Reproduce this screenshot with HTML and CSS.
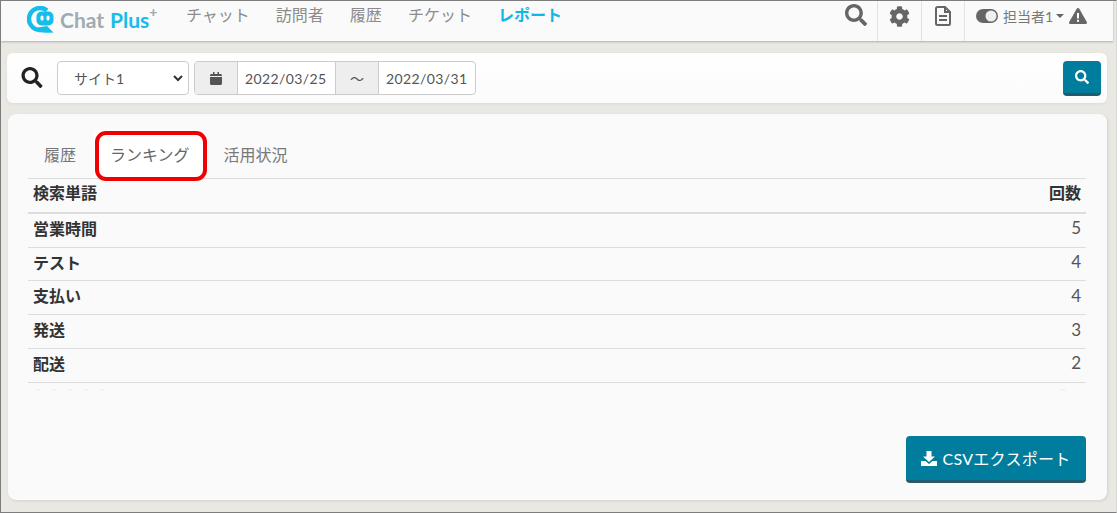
FILE: index.html
```html
<!DOCTYPE html>
<html lang="ja">
<head>
<meta charset="utf-8">
<title>レポート</title>
<link rel="stylesheet" href="styles.css">
</head>
<body>
<div class="frame">
  <header class="nav">
    <div class="logo">
      <svg class="logo-icon" viewBox="0 0 27 27"><path fill="none" stroke="#16bde9" stroke-width="4.500" d="M20 4.500A11 11 0 1 0 13 24"/><path fill="#16bde9" d="M11 21.500L20 20l6.500 6.500C21 27 15 26.500 11 26z"/><rect fill="#16bde9" x="9.500" y="5.500" width="17" height="14" rx="5"/><rect fill="#fff" x="13.500" y="9.500" width="3" height="5" rx="1.500"/><rect fill="#fff" x="19.500" y="9.500" width="3" height="5" rx="1.500"/></svg>
      <span class="logo-chat">Chat</span><span class="logo-plus">Plus</span><sup class="logo-sup">+</sup>
    </div>
    <nav class="menu">
      <a class="menu-item">チャット</a>
      <a class="menu-item">訪問者</a>
      <a class="menu-item">履歴</a>
      <a class="menu-item">チケット</a>
      <a class="menu-item menu-active">レポート</a>
    </nav>
    <div class="tools">
      <div class="tool tool-search">
        <svg class="ico ico-22" viewBox="0 0 512 512"><path fill="#666" d="M505 442.700L405.300 343c-4.500-4.500-10.600-7-17-7H372c27.600-35.300 44-79.700 44-128C416 93.100 322.900 0 208 0S0 93.100 0 208s93.100 208 208 208c48.300 0 92.700-16.400 128-44v16.300c0 6.400 2.500 12.500 7 17l99.700 99.700c9.400 9.400 24.600 9.400 33.900 0l28.300-28.300c9.400-9.400 9.400-24.600.1-34zM208 336c-70.700 0-128-57.200-128-128 0-70.700 57.200-128 128-128 70.700 0 128 57.200 128 128 0 70.700-57.200 128-128 128z"/></svg>
      </div>
      <div class="tool tool-gear">
        <svg class="ico ico-21" viewBox="0 0 512 512"><path fill="#666" d="M487.400 315.700l-42.600-24.600c4.300-23.200 4.300-47 0-70.200l42.600-24.600c4.900-2.800 7.100-8.600 5.500-14-11.100-35.600-30-67.800-54.700-94.600-3.800-4.100-10-5.100-14.800-2.300L380.800 110c-17.900-15.400-38.500-27.300-60.800-35.100V25.800c0-5.600-3.900-10.500-9.400-11.700-36.700-8.200-74.300-7.800-109.200 0-5.500 1.200-9.400 6.100-9.400 11.700V75c-22.200 7.900-42.800 19.800-60.800 35.100L88.700 85.500c-4.900-2.800-11-1.900-14.800 2.300-24.700 26.700-43.600 58.900-54.700 94.600-1.700 5.400.6 11.200 5.500 14L67.300 221c-4.300 23.200-4.300 47 0 70.200l-42.600 24.600c-4.900 2.800-7.100 8.600-5.500 14 11.100 35.600 30 67.800 54.700 94.600 3.800 4.100 10 5.100 14.800 2.300l42.600-24.600c17.900 15.400 38.500 27.300 60.800 35.100v49.200c0 5.600 3.900 10.500 9.400 11.700 36.700 8.200 74.300 7.800 109.200 0 5.500-1.200 9.400-6.100 9.400-11.700v-49.200c22.200-7.900 42.800-19.800 60.800-35.100l42.600 24.600c4.900 2.800 11 1.900 14.800-2.300 24.700-26.700 43.600-58.900 54.700-94.600 1.500-5.500-.7-11.300-5.600-14.100zM256 336c-44.100 0-80-35.900-80-80s35.900-80 80-80 80 35.900 80 80-35.900 80-80 80z"/></svg>
      </div>
      <div class="tool tool-doc">
        <svg class="ico-doc" viewBox="0 0 16 20"><path fill="none" stroke="#666" stroke-width="2" d="M10 1H2.500C1.600 1 1 1.600 1 2.500v15c0 .9.600 1.500 1.500 1.500h11c.9 0 1.500-.6 1.500-1.500V6L10 1zM10 1v5h5"/><path stroke="#666" stroke-width="1.800" d="M4 10h8M4 14h8"/></svg>
      </div>
      <div class="tool tool-user">
        <svg class="ico-toggle" viewBox="0 0 22 14"><rect fill="#666" width="22" height="14" rx="7"/><circle fill="#f0f0f0" cx="15" cy="7" r="5.500"/></svg>
        <span class="user-name">担当者1</span>
        <span class="caret"></span>
        <svg class="ico-warn" viewBox="0 0 18 16"><path fill="#666" d="M9 0c.6 0 1 .3 1.300.8l7.500 13.300c.5.900-.1 1.900-1.200 1.900H1.400C.3 16-.3 15 .2 14.100L7.700.8C8 .3 8.400 0 9 0z"/><rect fill="#fff" x="8" y="5" width="2" height="5.500"/><rect fill="#fff" x="8" y="11.800" width="2" height="2"/></svg>
      </div>
    </div>
  </header>

  <main class="page">
    <section class="filter">
      <svg class="filter-icon" viewBox="0 0 512 512"><path fill="#222" d="M505 442.700L405.300 343c-4.500-4.500-10.600-7-17-7H372c27.600-35.300 44-79.700 44-128C416 93.100 322.900 0 208 0S0 93.100 0 208s93.100 208 208 208c48.300 0 92.700-16.400 128-44v16.300c0 6.400 2.500 12.500 7 17l99.700 99.700c9.400 9.400 24.600 9.400 33.900 0l28.300-28.300c9.400-9.400 9.400-24.600.1-34zM208 336c-70.700 0-128-57.200-128-128 0-70.700 57.200-128 128-128 70.700 0 128 57.200 128 128 0 70.700-57.200 128-128 128z"/></svg>
      <div class="select">
        <span>サイト1</span>
        <svg class="select-arrow" viewBox="0 0 10 7"><path fill="none" stroke="#333" stroke-width="2" d="M1 1l4 4 4-4"/></svg>
      </div>
      <div class="dates">
        <span class="addon addon-cal">
          <svg class="ico-cal" viewBox="0 0 12 13"><path fill="#555" d="M0 5h12v6.500c0 .8-.7 1.500-1.500 1.500h-9C.7 13 0 12.300 0 11.500V5zM1.500 2H3V0h1.500v2h3V0H9v2h1.500c.8 0 1.500.7 1.500 1.500V4H0v-.5C0 2.700.7 2 1.500 2z"/></svg>
        </span>
        <span class="date">2022/03/25</span>
        <span class="addon addon-tilde">〜</span>
        <span class="date date-last">2022/03/31</span>
      </div>
      <button class="btn-search" type="button">
        <svg class="btn-search-icon" viewBox="0 0 512 512"><path fill="#fff" d="M505 442.700L405.300 343c-4.500-4.500-10.600-7-17-7H372c27.600-35.300 44-79.700 44-128C416 93.100 322.900 0 208 0S0 93.100 0 208s93.100 208 208 208c48.300 0 92.700-16.400 128-44v16.300c0 6.400 2.500 12.500 7 17l99.700 99.700c9.400 9.400 24.600 9.400 33.900 0l28.300-28.300c9.400-9.400 9.400-24.600.1-34zM208 336c-70.700 0-128-57.200-128-128 0-70.700 57.200-128 128-128 70.700 0 128 57.200 128 128 0 70.700-57.200 128-128 128z"/></svg>
      </button>
    </section>

    <section class="panel">
      <div class="tabs">
        <a class="tab">履歴</a>
        <a class="tab tab-active">ランキング<span class="mark"></span></a>
        <a class="tab">活用状況</a>
      </div>
      <div class="table">
        <div class="row row-head"><span class="term">検索単語</span><span class="term">回数</span></div>
        <div class="row"><span class="term">営業時間</span><span class="count">5</span></div>
        <div class="row"><span class="term">テスト</span><span class="count">4</span></div>
        <div class="row"><span class="term">支払い</span><span class="count">4</span></div>
        <div class="row"><span class="term">発送</span><span class="count">3</span></div>
        <div class="row"><span class="term">配送</span><span class="count">2</span></div>
      </div>
      <div class="ghost"><span class="ghost-left"></span><span class="ghost-right"></span></div>
      <div class="actions">
        <button class="btn-csv" type="button">
          <svg class="ico-dl" viewBox="0 0 16 15"><path fill="#fff" d="M5.500 0h5v5.500H14L8 11 2 5.500h3.500z"/><path fill="#fff" d="M0 10h4.500L8 13l3.500-3H16v5H0z"/></svg>
          <span>CSVエクスポート</span>
        </button>
      </div>
    </section>
  </main>
</div>
</body>
</html>
```
FILE: styles.css
```css
* { box-sizing: border-box; }
html, body { margin: 0; padding: 0; }
body {
  font-family: "Lato", "Noto Sans CJK JP", sans-serif;
  color: #333;
}
.frame {
  width: 1117px;
  height: 513px;
  border: 1px solid #7d7d7d;
  border-right-color: #d8d8d4;
  background: #eae8e2;
  overflow: hidden;
  display: flex;
  flex-direction: column;
}
.nav {
  height: 40px;
  margin-right: 3px;
  flex: none;
  display: flex;
  align-items: stretch;
  background: #fafafa;
  box-shadow: 0 1px 2px rgba(0, 0, 0, .25);
  position: relative;
}
.logo {
  display: flex;
  align-items: center;
  padding: 0 0 3px 26px;
  width: 185px;
  flex: none;
  font-size: 21px;
  font-weight: 700;
}
.logo-icon { width: 27px; height: 27px; margin-right: 6px; flex: none; }
.logo-chat { color: #9fabb1; margin-right: 6px; }
.logo-plus { color: #16bde9; }
.logo-sup { color: #9fabb1; font-size: 14px; font-weight: 900; line-height: 1; align-self: flex-start; margin-top: 4px; }
.menu {
  display: flex;
  gap: 26px;
  font-size: 16px;
  color: #8c8c8c;
  line-height: 28px;
  flex: none;
}
.menu-active { color: #12b5e6; font-weight: 700; }
.tools { display: flex; margin-left: auto; }
.tool {
  display: flex;
  align-items: flex-start;
  border-left: 1px solid #e2e2e2;
  padding-top: 4px;
}
.tool-search { border-left: none; width: 32px; padding-top: 3px; }
.tool-gear { width: 44px; padding-left: 11px; padding-top: 5px; }
.tool-doc { width: 43px; padding-left: 13px; padding-top: 5px; }
.tool-user { width: 149px; padding: 0 0 11px 11px; align-items: center; }
.ico-22 { width: 22px; height: 22px; }
.ico-21 { width: 21px; height: 21px; }
.ico-doc { width: 16px; height: 20px; }
.ico-toggle { width: 22px; height: 14px; }
.user-name { font-size: 14px; color: #777; margin-left: 5px; }
.caret {
  width: 0;
  height: 0;
  margin-left: 3px;
  border-left: 4px solid transparent;
  border-right: 4px solid transparent;
  border-top: 4px solid #666;
}
.ico-warn { width: 18px; height: 16px; margin-left: 5px; }

.page {
  flex: 1;
  min-height: 0;
  display: flex;
  flex-direction: column;
  gap: 11px;
  padding: 12px 9px 12px 6px;
}
.filter {
  height: 50px;
  flex: none;
  background: linear-gradient(#fff, #fbfbfb);
  border-radius: 6px;
  box-shadow: 0 1px 3px rgba(0, 0, 0, .06);
  display: flex;
  align-items: flex-start;
  padding: 8px 6px 0 14px;
}
.filter-icon { width: 22px; height: 21px; margin-top: 6px; flex: none; }
.select {
  width: 132px;
  height: 34px;
  margin-left: 14px;
  border: 1px solid #ccc;
  border-radius: 4px;
  background: #fff;
  display: flex;
  align-items: center;
  justify-content: space-between;
  padding: 0 5px 0 16px;
  font-size: 14px;
  color: #555;
  flex: none;
}
.select-arrow { width: 10px; height: 7px; }
.dates {
  display: flex;
  height: 34px;
  margin-left: 5px;
  border: 1px solid #ccc;
  border-radius: 4px;
  background: #fff;
  width: 282px;
  overflow: hidden;
  flex: none;
}
.addon {
  width: 43px;
  background: #eee;
  border-right: 1px solid #ccc;
  display: flex;
  align-items: center;
  justify-content: center;
  color: #555;
  flex: none;
}
.addon-tilde { font-size: 14px; }
.ico-cal { width: 12px; height: 13px; }
.date {
  width: 98px;
  display: flex;
  align-items: center;
  padding-left: 7px;
  font-size: 14px;
  color: #555;
  letter-spacing: .4px;
  border-right: 1px solid #ccc;
  flex: none;
}
.date-last { border-right: none; }
.btn-search {
  width: 38px;
  height: 35px;
  margin-left: auto;
  padding: 0;
  border: none;
  border-bottom: 3px solid #245a6a;
  border-radius: 4px;
  background: #007d9c;
  display: flex;
  align-items: center;
  justify-content: center;
}
.btn-search-icon { width: 14px; height: 14px; }

.panel {
  flex: 1;
  min-height: 0;
  background: #fafafa;
  border-radius: 8px;
  box-shadow: 1px 1px 3px rgba(0, 0, 0, .1);
  padding: 16px 21px 17px 20px;
  margin-left: 1px;
  display: flex;
  flex-direction: column;
}
.tabs {
  display: flex;
  gap: 2px;
  height: 48px;
  flex: none;
  font-size: 16px;
  color: #777;
}
.tab {
  padding: 0 16px;
  line-height: 49px;
  position: relative;
}
.tab-active { color: #666; background: #fff; }
.mark {
  position: absolute;
  left: 1px;
  top: 1px;
  width: 112px;
  height: 50px;
  border: 4px solid #f00000;
  border-radius: 11px;
}
.table { flex: none; border-top: 1px solid #ddd; }
.row {
  height: 33.750px;
  padding: 0 5px 5px;
  display: flex;
  justify-content: space-between;
  align-items: center;
  border-bottom: 1px solid #ddd;
  font-size: 16px;
}
.row-head { border-bottom-width: 2px; height: 34.900px; padding-bottom: 7px; }
.term { font-weight: 700; color: #333; }
.count { font-size: 17px; color: #555; }
.ghost {
  flex: none;
  height: 2px;
  margin-top: 6px;
  padding: 0 20px 0 8px;
  display: flex;
  justify-content: space-between;
}
.ghost-left {
  width: 76px;
  background: repeating-linear-gradient(90deg, #f3f3f3 0 5px, transparent 5px 16px);
}
.ghost-right { width: 5px; background: #f3f3f3; }
.actions { margin-top: auto; display: flex; justify-content: flex-end; }
.btn-csv {
  width: 180px;
  height: 47px;
  padding: 0;
  border: none;
  border-bottom: 3px solid #245a6a;
  border-radius: 4px;
  background: #007d9c;
  color: #fff;
  font: 16px "Lato", "Noto Sans CJK JP", sans-serif;
  display: flex;
  align-items: center;
  justify-content: center;
  gap: 5px;
}
.btn-csv span { letter-spacing: .3px; }
.ico-dl { width: 16px; height: 15px; }
```
